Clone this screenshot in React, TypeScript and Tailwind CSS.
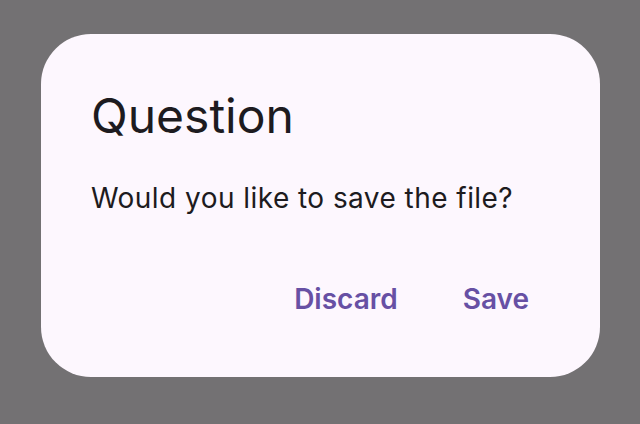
export default function App() {
  return (
    <div className="w-[640px] h-[424px] bg-[#737173] pt-[34px] pl-[41px]" style={{ fontFamily: "Inter, 'Noto Sans', sans-serif" }}>
      <div className="w-[559px] h-[343px] rounded-[50px] bg-[#FDF7FE] flex flex-col pl-[50px] pr-[71px]">
        <div className="mt-[52px] text-[48px] leading-[60px] text-[#1D1B20]">Question</div>
        <div className="mt-[34px] text-[28px] leading-[36px] tracking-[0.45px] text-[#1D1B20]">Would you like to save the file?</div>
        <div className="mt-[65px] flex justify-end gap-[65px] text-[28px] leading-[36px] font-semibold text-[#6750A4]">
          <span>Discard</span>
          <span>Save</span>
        </div>
      </div>
    </div>
  );
}
